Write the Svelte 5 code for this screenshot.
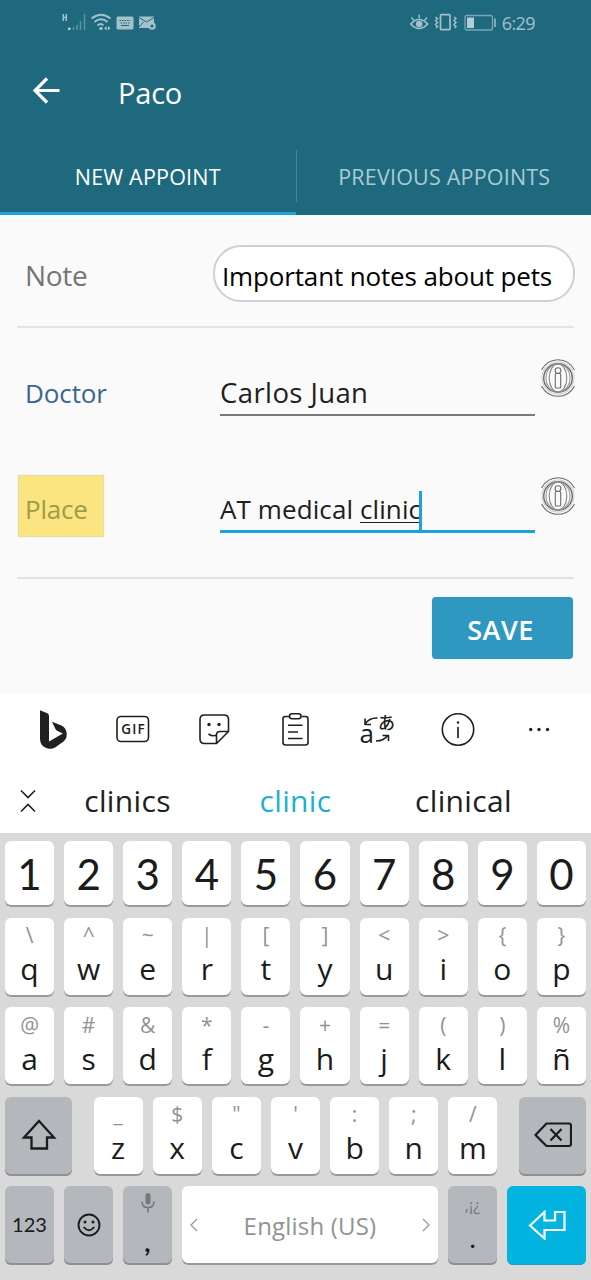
<script>
  const digits = ['1', '2', '3', '4', '5', '6', '7', '8', '9', '0'];
  const letterRows = [
    [['\\', 'q'], ['^', 'w'], ['~', 'e'], ['|', 'r'], ['[', 't'], [']', 'y'], ['<', 'u'], ['>', 'i'], ['{', 'o'], ['}', 'p']],
    [['@', 'a'], ['#', 's'], ['&', 'd'], ['*', 'f'], ['-', 'g'], ['+', 'h'], ['=', 'j'], ['(', 'k'], [')', 'l'], ['%', 'ñ']]
  ];
  const bottomLetters = [['_', 'z'], ['$', 'x'], ['"', 'c'], ["'", 'v'], [':', 'b'], [';', 'n'], ['/', 'm']];
</script>

{#snippet key(hint, letter)}
  <button class="key"><span class="hint">{hint}</span><span class="letter">{letter}</span></button>
{/snippet}

{#snippet infoIcon()}
  <svg class="info" width="34" height="40" viewBox="0 0 34 40" fill="none" stroke="#6a6a6a" stroke-width="1.100">
    <path d="M.5 11Q6 .7 17 .7T33.500 11M.5 27Q6 37.300 17 37.300T33.500 27" />
    <circle cx="17" cy="19" r="16" stroke="#d0d0d0" />
    <circle cx="17" cy="19" r="14.300" stroke-width="1.400" />
    <ellipse cx="17" cy="19" rx="12" ry="14" stroke="#9c9c9c" />
    <ellipse cx="17" cy="19" rx="8.800" ry="14" stroke="#888" />
    <rect x="14.300" y="14.500" width="5.400" height="14.500" rx="1" />
    <circle cx="17" cy="11.600" r="2.900" />
  </svg>
{/snippet}

<div class="screen">
  <header>
    <div class="status">
      <svg width="100" height="24" viewBox="60 10 100 24" fill="none" stroke="#a3c1ca">
        <path d="M63.300 14v7M66.300 14v7M63 17.500h3.500" stroke-width="1.500" />
        <path d="M73.500 27v3M77 25v5M80.500 21v9M84.500 14v16" stroke="#5c94a3" stroke-width="1.500" />
        <circle cx="69.300" cy="28.800" r="1.400" fill="#bdd5dc" stroke="none" />
        <path d="M91.500 18.500q9.500-7.500 19 0M94.500 22q6.500-5.500 13 0M97.500 25.500q3.500-3 6 0" stroke-width="1.900" />
        <circle cx="101" cy="28.500" r="1.700" fill="#a3c1ca" stroke="none" />
        <path d="M104 28.300l2.800-2.300v4.600zM110.700 28.300l-2.700-2.300v4.600z" fill="#a3c1ca" stroke="none" />
        <rect x="116.500" y="16.500" width="17" height="13" rx="1.500" fill="#a3c1ca" stroke="none" />
        <path d="M119.500 20.500h11M120.500 23h9" stroke="#1e697d" stroke-dasharray="1.500 1" />
        <path d="M121 25.500h8" stroke="#1e697d" />
        <path d="M139 16.500h15v7.500h-5v4h-10z" fill="#a3c1ca" stroke="none" />
        <path d="M139 17.500l7.500 4.500 7.500-4.500M139 27l4.500-5" stroke="#1e697d" />
        <circle cx="152" cy="26" r="2.700" stroke-width="2.200" />
      </svg>
      <div class="status-right">
        <svg width="88" height="24" viewBox="408 10 88 24" fill="none" stroke="#a3c1ca">
          <path d="M410.700 24q8.300-9 17 0q-8.500 9-17 0z" stroke-width="1.700" />
          <circle cx="419.200" cy="24" r="3.300" fill="#a3c1ca" stroke="none" />
          <path d="M419.200 14.500v4M411.500 17.500l2.500 3M427 17.500l-2.500 3" stroke-width="1.400" />
          <rect x="440.500" y="14.700" width="9.500" height="15" rx="1" stroke-width="1.700" />
          <path d="M435.500 17l2 1.500-2 2 2 2-2 2 2 2-1.500 1.500M454 17l2 1.500-2 2 2 2-2 2 2 2-1.500 1.500" stroke-width="1.500" />
          <rect x="465" y="15.500" width="27.500" height="14.500" rx="2" stroke="#7aa7b4" stroke-width="1.300" />
          <path d="M467 17.500h7v10.500h-7z" fill="#b4ced6" stroke="none" />
          <path d="M495 18.500v8.500" stroke-width="1.500" />
        </svg>
        <span>6:29</span>
      </div>
    </div>
    <div class="appbar">
      <svg width="28" height="28" viewBox="32 77 28 28" fill="none" stroke="#fff" stroke-width="3.200">
        <path d="M59.500 90.500H35.500M47 78.500L35 90.500l12 12" />
      </svg>
      <h1>Paco</h1>
    </div>
    <nav>
      <button class="tab active">NEW APPOINT</button>
      <button class="tab">PREVIOUS APPOINTS</button>
    </nav>
  </header>

  <main>
    <div class="row note">
      <span class="label">Note</span>
      <div class="pill">Important notes about pets</div>
    </div>
    <div class="row doctor">
      <span class="label">Doctor</span>
      <div class="field">Carlos Juan</div>
      {@render infoIcon()}
    </div>
    <div class="row place">
      <span class="label">Place</span>
      <div class="field">AT medical <span class="composing">clinic</span><i class="caret"></i></div>
      {@render infoIcon()}
    </div>
    <div class="actions"><button class="save">SAVE</button></div>
  </main>

  <section class="tools">
    <svg width="591" height="72" viewBox="0 693 591 72" fill="none" stroke="#202020" stroke-width="1.600" stroke-linejoin="round">
      <path d="M40 710.200l7.300 3Q49 714 49 716V741.500L62.800 733.500L57.500 731Q56 730.300 55.300 728.800L52 721.800L61.500 725.500Q66.700 728 66.700 734.500Q66.700 738.800 63.500 741.500L55.500 747.200Q51.500 749.700 47 748.300Q40 746 40 739Z" fill="#202020" stroke="none" />
      <rect x="117" y="716.500" width="31.500" height="25" rx="4" />
      <text x="121.300" y="734" class="gif">GIF</text>
      <path d="M216.500 743.500h-12q-4.500 0-4.500-4.500v-19.500q0-4.500 4.500-4.500h19.500q4.500 0 4.500 4.500v12zM216.500 743.500v-8.500q0-3.500 3.500-3.500h8.500M208.500 734q4 3 8.500.8" />
      <circle cx="209" cy="724.500" r="1.700" fill="#202020" stroke="none" /><circle cx="219" cy="724.500" r="1.700" fill="#202020" stroke="none" />
      <path d="M289.500 716.500h-4q-2.500 0-2.500 2.500v23.500q0 2.500 2.500 2.500h20q2.500 0 2.500-2.500v-23.500q0-2.500-2.500-2.500h-4" />
      <rect x="289.500" y="713.700" width="11.500" height="5" rx="2.500" />
      <path d="M288 725.300h14.500M288 732h10M288 738.500h14.500" />
      <text x="359.500" y="743" class="glyph-a">a</text>
      <text x="378" y="729" class="glyph-kana">あ</text>
      <path d="M377.500 718q-8-.5-12.500 6M365 718.500v6h6M376 741q8 0 12-6M382.500 735.500h6v5.500" />
      <circle cx="458" cy="729.500" r="15.700" />
      <path d="M458 727v11" stroke-width="1.700" /><circle cx="458" cy="722.500" r="1.200" fill="#202020" stroke="none" />
      <g fill="#202020" stroke="none"><circle cx="530.700" cy="729.500" r="1.700" /><circle cx="539" cy="729.500" r="1.700" /><circle cx="547.500" cy="729.500" r="1.700" /></g>
    </svg>
  </section>

  <section class="suggestions">
    <svg width="16" height="24" viewBox="20 789 16 24" fill="none" stroke="#202020" stroke-width="1.600"><path d="M21 790.500l7 7 7-7M21 811.500l7-7 7 7" /></svg>
    <span>clinics</span><span class="chosen">clinic</span><span>clinical</span>
  </section>

  <section class="keyboard">
    <div class="keys digits">
      {#each digits as d}<button class="key">{d}</button>{/each}
    </div>
    {#each letterRows as r}
      <div class="keys">{#each r as [h, l]}{@render key(h, l)}{/each}</div>
    {/each}
    <div class="keys shift-row">
      <button class="key dark">
        <svg width="36" height="34" viewBox="0 0 36 34" fill="none" stroke="#1b1b1b" stroke-width="2.300"><path d="M18 3L33 19.500H26V30.500H10.500V19.500H3z" /></svg>
      </button>
      <div class="keys seven">{#each bottomLetters as [h, l]}{@render key(h, l)}{/each}</div>
      <button class="key dark">
        <svg width="38" height="26" viewBox="0 0 38 26" fill="none" stroke="#1b1b1b" stroke-width="2.200" stroke-linejoin="round"><path d="M12.500 1.500H35q2 0 2 2V22q0 2-2 2H12.500L1.500 13z" /><path d="M16.500 7l11 11.500M27.500 7l-11 11.500" /></svg>
      </button>
    </div>
    <div class="keys last">
      <button class="key dark num">123</button>
      <button class="key dark">
        <svg width="24" height="24" viewBox="0 0 24 24" fill="none" stroke="#1b1b1b" stroke-width="1.900"><circle cx="12" cy="12" r="10.500" /><path d="M6.700 14q5.300 6.500 10.600 0" /><g fill="#1b1b1b" stroke="none"><circle cx="8" cy="9" r="1.500" /><circle cx="16" cy="9" r="1.500" /></g></svg>
      </button>
      <button class="key dark stacked">
        <svg width="16" height="24" viewBox="0 0 16 24" fill="none" stroke="#77797d" stroke-width="1.700"><rect x="5.500" y="2" width="5" height="11.500" rx="2.500" fill="#77797d" stroke="none" /><path d="M2 10.500q0 6 6 6t6-6M8 16.500v5" /></svg>
        <b>,</b>
      </button>
      <button class="key space">
        <svg width="8" height="14" viewBox="0 0 8 14" fill="none" stroke="#999" stroke-width="1.300"><path d="M7 1L1 7l6 6" /></svg>
        <span>English (US)</span>
        <svg width="8" height="14" viewBox="0 0 8 14" fill="none" stroke="#999" stroke-width="1.300"><path d="M1 1l6 6-6 6" /></svg>
      </button>
      <button class="key dark stacked punct"><small>,¡¿</small><b>.</b></button>
      <button class="key enter">
        <svg width="38" height="30" viewBox="0 0 38 30" fill="none" stroke="#fff" stroke-width="2.200"><path d="M2 15.500L16.500 2v8.500H27V2h9.500v18H16.500v8.500z" /></svg>
      </button>
    </div>
  </section>
</div>

<style>
  :global(body) { margin: 0; background: #fafafa; }
  .screen { width: 591px; height: 1280px; overflow: hidden; font-family: "Open Sans", "Noto Sans", sans-serif; color: #202020; display: flex; flex-direction: column; }
  button { font: inherit; color: inherit; border: 0; padding: 0; margin: 0; background: none; box-sizing: border-box; }
  svg { display: block; flex: none; }
  header { height: 215px; background: #1e697d; color: #fff; }
  .status { height: 46px; box-sizing: border-box; padding: 10px 56px 0 60px; display: flex; justify-content: space-between; }
  .status-right { display: flex; gap: 6px; color: #a3c1ca; font-size: 18px; line-height: 26px; letter-spacing: -0.6px; }
  .appbar { height: 103px; display: flex; padding-left: 32px; box-sizing: border-box; gap: 58px; }
  .appbar svg { margin-top: 31px; }
  h1 { margin: 27px 0 0; font-size: 29px; font-weight: 450; line-height: 40px; letter-spacing: -0.2px; }
  nav { height: 66px; display: grid; grid-template-columns: 1fr 1fr; }
  .tab { border-bottom: 3px solid transparent; font-size: 21.500px; font-weight: 450; line-height: 30px; padding-bottom: 7px; color: #a8ccd6; letter-spacing: 0.2px; }
  .tab:last-child { padding-left: 2px; background: linear-gradient(#4b8696, #4b8696) 0 1px / 1px 52px no-repeat; }
  .tab.active { color: #fff; border-color: #1ba1dc; }

  main { height: 478px; background: #fafafa; padding: 0 17px; box-sizing: border-box; }
  .row { display: grid; grid-template-columns: 196px 1fr; box-sizing: border-box; align-items: start; }
  .label { padding-left: 8px; line-height: 40px; font-size: 26px; letter-spacing: 0; }
  .note { height: 113px; border-bottom: 2px solid #e4e4e4; }
  .note .label { margin-top: 40px; font-size: 28px; color: #757575; letter-spacing: -0.3px; }
  .pill { margin: 30px -1px 0 0; height: 57px; box-sizing: border-box; border: 2px solid #d0d0d0; border-radius: 28px; background: #fff; color: #000; padding-left: 7px; font-size: 26px; font-weight: 500; line-height: 59px; white-space: nowrap; letter-spacing: -0.15px; }
  .doctor, .place { grid-template-columns: 203px 315px 34px; column-gap: 0; justify-content: start; }
  .doctor { height: 119px; padding-top: 31px; }
  .doctor .label { margin-top: 14px; color: #3a6591; letter-spacing: -0.1px; }
  .field { height: 57px; box-sizing: border-box; border-bottom: 2px solid #7b7b7b; font-size: 27.500px; line-height: 40px; padding-top: 14px; letter-spacing: 0.400px; white-space: nowrap; }
  .info { margin-left: 6px; }
  .place { height: 132px; padding-top: 30px; border-bottom: 2px solid #e2e2e2; }
  .place .label { width: 84px; height: 60px; box-sizing: border-box; margin: -1px 0 0 2px; padding-left: 6px; line-height: 66px; background: #fae580; color: #a09b4b; box-shadow: 0 0 1px 1px #e6dca6; letter-spacing: -0.2px; }
  .place .field { height: 56px; border-bottom: 3px solid #1ba1dc; font-size: 26px; letter-spacing: 0.1px; padding-top: 12px; }
  .composing { text-decoration: underline; text-decoration-thickness: 1px; text-underline-offset: 3px; }
  .caret { display: inline-block; width: 3px; height: 40px; margin: -8px 0 -8px -2px; background: #1ba1dc; vertical-align: -9px; position: relative; top: -5px; }
  .actions { display: flex; justify-content: flex-end; padding: 18px 1px 0 0; }
  .save { width: 141px; height: 62px; border-radius: 4px; background: #2f98c0; color: #fff; font-size: 27px; font-weight: 650; letter-spacing: 0.5px; box-shadow: 0 0 2px #cfe0e8; padding: 2px 4px 0 0; }

  .tools { height: 72px; background: #fff; }
  .tools text { stroke: none; fill: #202020; }
  .gif { font: 600 13.5px "Open Sans", sans-serif; letter-spacing: 1.2px; }
  .glyph-a { font: 500 26px "Open Sans", sans-serif; }
  .glyph-kana { font: 500 17px "Noto Sans CJK JP", sans-serif; }
  .suggestions { height: 68px; background: #fff; display: grid; grid-template-columns: 16px 168px 168px 168px; padding-left: 20px; font-size: 30px; font-weight: 450; line-height: 72px; text-align: center; letter-spacing: 0.35px; }
  .suggestions svg { margin-top: 24px; }
  .suggestions span { padding-left: 15px; }
  .chosen { color: #1eb0d0; }

  .keyboard { flex: 1; background: #d9d9d9; padding: 8px 5px 0; display: flex; flex-direction: column; gap: 10.500px; }
  .keys { display: grid; grid-template-columns: repeat(10, minmax(0, 1fr)); gap: 10px; height: 79px; flex: none; }
  .key { height: 100%; background: #fff; border-radius: 6px; box-shadow: inset 0 -2px 0 #999; color: #1b1b1b; display: flex; flex-direction: column; align-items: center; justify-content: center; min-width: 0; }
  .digits { height: 66px; }
  .digits .key { font: 42px Lato, sans-serif; line-height: 66px; }
  .hint { height: 36px; line-height: 34px; font-size: 21px; color: #929292; }
  .letter { height: 42px; line-height: 30px; font-size: 30px; font-weight: 500; }
  .dark { background: #b4b7bc; box-shadow: inset 0 -2px 0 #8d9094; }
  .dark > svg, .enter > svg { margin-top: -2px; }
  .shift-row { grid-template-columns: 67px 404px 67px; gap: 0; justify-content: space-between; }
  .seven { grid-template-columns: repeat(7, 49px); justify-content: space-between; gap: 0; }
  .last { grid-template-columns: 49px 49px 49px 256px 49px 79px; }
  .num { font: 20px Lato, sans-serif; padding-bottom: 3px; }
  .stacked { justify-content: flex-start; padding-top: 7px; }
  .stacked b { font: 700 27px/30px Lato, sans-serif; margin-top: 12px; }
  .punct small { font-size: 16px; line-height: 24px; color: #77797d; }
  .punct b { font-size: 22px; margin-top: 8px; }
  .space { flex-direction: row; justify-content: space-between; padding: 0 8px 1px; color: #929292; font-size: 24px; letter-spacing: 0.2px; }
  .enter { background: #03b4e1; box-shadow: inset 0 -1px 0 #1ba0c2; }
</style>
